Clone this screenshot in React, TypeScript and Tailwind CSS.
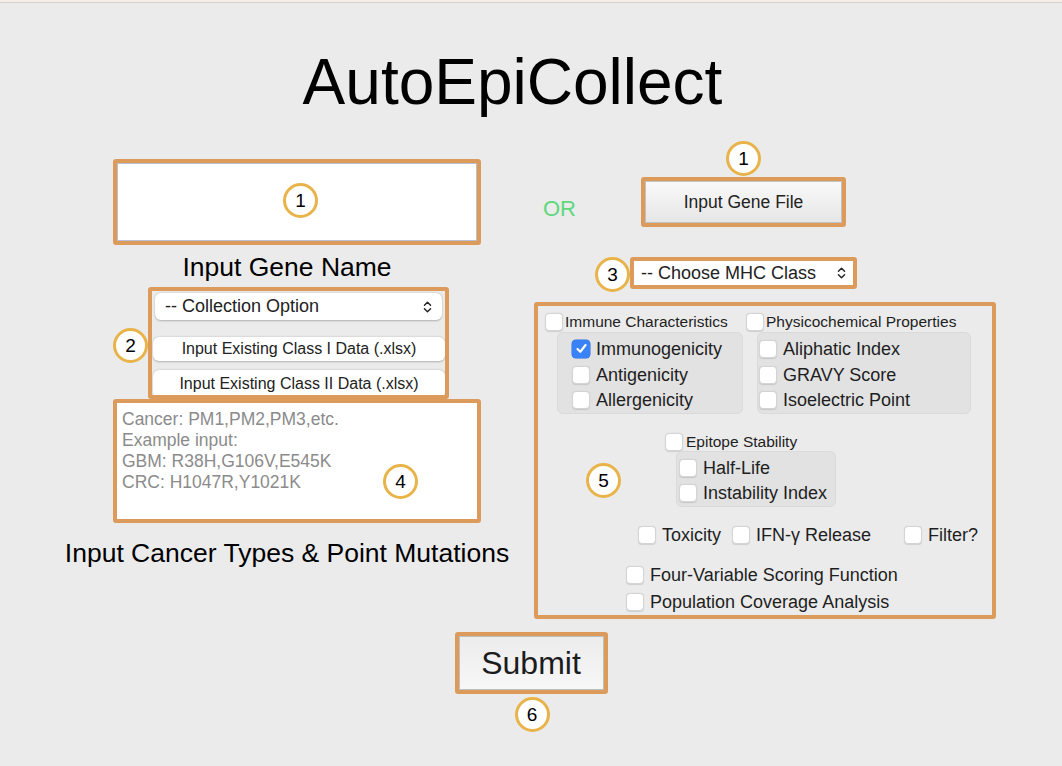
import type { ReactNode } from "react";

const font = { fontFamily: '"Liberation Sans", Arial, sans-serif' };

function Badge({ n, className }: { n: string; className: string }) {
  return (
    <div
      className={`absolute w-[35px] h-[35px] rounded-full border-[3px] border-[#e8b44a] bg-white flex items-center justify-center text-[19px] text-black leading-none ${className}`}
    >
      {n}
    </div>
  );
}

function Box({ children, className }: { children: ReactNode; className: string }) {
  return <div className={`relative border-4 border-[#dc9a5b] rounded-[3px] ${className}`}>{children}</div>;
}

function Check({ checked }: { checked?: boolean }) {
  if (checked) {
    return (
      <span className="w-[18px] h-[18px] shrink-0 rounded-[4px] bg-[#3a82f7] flex items-center justify-center shadow-[0_0_0_0.5px_#2f6fd8]">
        <svg viewBox="0 0 12 12" className="w-[13px] h-[13px]" fill="none" stroke="white" strokeWidth="2" strokeLinecap="round" strokeLinejoin="round">
          <path d="M2.3 6.4 L4.9 9 L9.8 2.8" />
        </svg>
      </span>
    );
  }
  return (
    <span className="w-[18px] h-[18px] shrink-0 rounded-[4px] bg-white border border-[#d4d4d4] shadow-[0_0.5px_1px_rgba(0,0,0,0.12)]" />
  );
}

function Opt({ label, checked, small, gap = "gap-[6px]" }: { label: string; checked?: boolean; small?: boolean; gap?: string }) {
  return (
    <div className={`flex items-center ${gap} ${small ? "text-[15.5px]" : "text-[18px]"} text-[#1e1e1e] leading-none whitespace-nowrap`}>
      <Check checked={checked} />
      <span>{label}</span>
    </div>
  );
}

function Chevrons() {
  return (
    <svg viewBox="0 0 10 16" className="w-[9px] h-[14px]" fill="none" stroke="#222" strokeWidth="1.6" strokeLinecap="round" strokeLinejoin="round">
      <path d="M1.5 6 L5 2.5 L8.5 6" />
      <path d="M1.5 10 L5 13.5 L8.5 10" />
    </svg>
  );
}

export default function App() {
  return (
    <div className="w-full h-[766px] bg-[#ebebeb] overflow-hidden" style={font}>
      <div className="h-[3px] bg-[#f6eee9] border-b border-[#d8d2ce]" />

      <h1 className="mt-[47px] pr-[37px] text-center text-[64px] leading-[64px] text-black">AutoEpiCollect</h1>

      <div className="mt-[45px] flex items-start">
        {/* Left column */}
        <div className="ml-[113px] w-[368px] flex flex-col">
          <Box className="h-[86px]">
            <div className="w-full h-full bg-white border border-[#b9c0d0]" />
            <Badge n="1" className="left-[166px] top-[20px]" />
          </Box>
          <div className="mt-[7px] -ml-[60px] -mr-[40px] text-center text-[26.5px] leading-[30px] text-black">Input Gene Name</div>

          <Box className="mt-[5px] ml-[35px] w-[301px] h-[112px]">
            <div className="w-full h-full overflow-hidden flex flex-col">
              <div className="mt-[2px] ml-[3px] w-[287px] h-[27px] bg-white rounded-[6px] shadow-[0_0.5px_2px_rgba(0,0,0,0.25)] flex items-center justify-between pl-[10px] pr-[10px] text-[18px] text-[#222]">
                <span>-- Collection Option</span>
                <Chevrons />
              </div>
              <div className="mt-[17px] ml-[1px] w-[292px] h-[28px] bg-white rounded-[6px] shadow-[0_0.5px_2px_rgba(0,0,0,0.25)] flex items-center justify-center text-[16px] text-[#222]">
                Input Existing Class I Data (.xlsx)
              </div>
              <div className="mt-[9px] ml-[1px] w-[292px] h-[28px] shrink-0 bg-white rounded-[6px] shadow-[0_0.5px_2px_rgba(0,0,0,0.25)] flex items-start pt-[2px] justify-center text-[16px] text-[#222]">
                Input Existing Class II Data (.xlsx)
              </div>
            </div>
            <Badge n="2" className="left-[-39px] top-[37px]" />
          </Box>

          <Box className="h-[124px]">
            <div className="w-full h-full bg-white pl-[5px] pt-[6px] text-[17.5px] leading-[21px] text-[#8b8b8b]">
              <div>Cancer: PM1,PM2,PM3,etc.</div>
              <div>Example input:</div>
              <div>GBM: R38H,G106V,E545K</div>
              <div>CRC: H1047R,Y1021K</div>
            </div>
            <Badge n="4" className="left-[266px] top-[61px]" />
          </Box>
          <div className="mt-[15px] -ml-[60px] -mr-[40px] text-center text-[26.5px] leading-[30px] text-black whitespace-nowrap">
            Input Cancer Types &amp; Point Mutations
          </div>
        </div>

        {/* Right column */}
        <div className="ml-[53px] w-[462px] pt-[18px] flex flex-col">
          <div className="flex items-start">
            <div className="ml-[9px] mt-[20px] w-[98px] text-[22px] leading-[24px] text-[#5dd87c]">OR</div>
            <Box className="w-[205px] h-[50px]">
              <div className="w-full h-full border border-[#c2c2c2] bg-gradient-to-b from-[#f9f9f9] to-[#e6e6e6] flex items-center justify-center text-[17.5px] text-[#222]">
                Input Gene File
              </div>
              <Badge n="1" className="left-[81px] top-[-40px]" />
            </Box>
          </div>

          <Box className="mt-[30px] ml-[96px] w-[227px] h-[32px]">
            <div className="w-full h-full bg-white flex items-center justify-between pl-[7px] pr-[7px] text-[18px] text-[#222]">
              <span>-- Choose MHC Class</span>
              <Chevrons />
            </div>
            <Badge n="3" className="left-[-39px] top-[-4px]" />
          </Box>

          <Box className="mt-[13px] w-[462px] h-[317px]">
            <div className="pl-[7px] pt-[6px] flex flex-col">
              <div className="flex">
                <div className="w-[198px] flex flex-col">
                  <div className="h-[20px] flex items-center">
                    <Opt label="Immune Characteristics" small gap="gap-[2px]" />
                  </div>
                  <div className="ml-[12px] h-[82px] w-[186px] rounded-[6px] bg-[#e2e2e2] border border-[#dadada] pl-[14px] pt-[3px] flex flex-col">
                    <div className="h-[26px] flex items-center"><Opt label="Immunogenicity" checked /></div>
                    <div className="h-[26px] flex items-center"><Opt label="Antigenicity" /></div>
                    <div className="h-[26px] flex items-center"><Opt label="Allergenicity" /></div>
                  </div>
                </div>
                <div className="ml-[3px] w-[224px] flex flex-col">
                  <div className="h-[20px] flex items-center">
                    <Opt label="Physicochemical Properties" small gap="gap-[2px]" />
                  </div>
                  <div className="ml-[11px] h-[82px] w-[214px] rounded-[6px] bg-[#e2e2e2] border border-[#dadada] pl-[1px] pt-[3px] flex flex-col">
                    <div className="h-[26px] flex items-center"><Opt label="Aliphatic Index" /></div>
                    <div className="h-[26px] flex items-center"><Opt label="GRAVY Score" /></div>
                    <div className="h-[26px] flex items-center"><Opt label="Isoelectric Point" /></div>
                  </div>
                </div>
              </div>

              <div className="mt-[18px] ml-[120px] flex flex-col">
                <div className="h-[19px] flex items-center">
                  <Opt label="Epitope Stability" small gap="gap-[3px]" />
                </div>
                <div className="ml-[11px] h-[56px] w-[160px] rounded-[6px] bg-[#e2e2e2] border border-[#dadada] pl-[2px] pt-[3px] flex flex-col">
                  <div className="h-[26px] flex items-center"><Opt label="Half-Life" /></div>
                  <div className="h-[26px] flex items-center"><Opt label="Instability Index" /></div>
                </div>
              </div>

              <div className="mt-[19px] ml-[93px] h-[18px] flex items-center">
                <Opt label="Toxicity" />
                <div className="ml-[11px]"><Opt label="IFN-γ Release" /></div>
                <div className="ml-[33px]"><Opt label="Filter?" /></div>
              </div>

              <div className="mt-[22px] ml-[81px] h-[18px] flex items-center">
                <Opt label="Four-Variable Scoring Function" />
              </div>
              <div className="mt-[9px] ml-[81px] h-[18px] flex items-center">
                <Opt label="Population Coverage Analysis" />
              </div>
            </div>
            <Badge n="5" className="left-[48px] top-[157px]" />
          </Box>
        </div>
      </div>

      <div className="mt-[13px] flex justify-center">
        <Box className="w-[153px] h-[62px]">
          <div className="w-full h-full border border-[#bfbfbf] bg-gradient-to-b from-[#ececec] to-[#f7f7f7] flex items-center justify-center text-[32px] text-[#1c1c1c]">
            Submit
          </div>
          <Badge n="6" className="left-[56px] top-[61px]" />
        </Box>
      </div>
    </div>
  );
}
